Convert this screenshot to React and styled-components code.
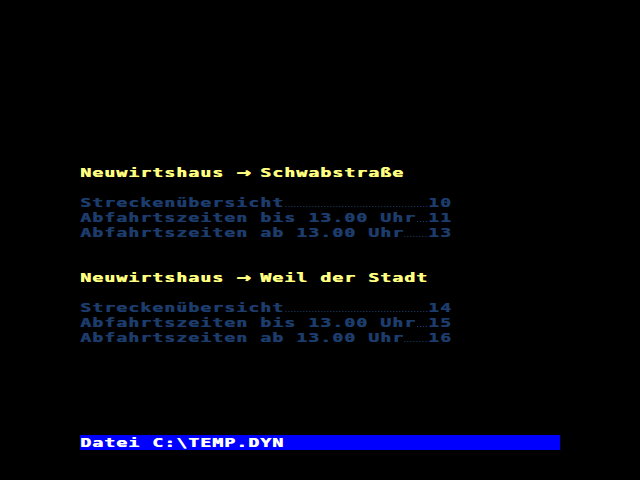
import React from 'react'
import styled, { createGlobalStyle } from 'styled-components'

// the text screen is laid out in 12px columns; glyphs are drawn narrow and stretched
const SCALE = 1.4
const COL = 12 / SCALE

const GlobalStyle = createGlobalStyle`
  html, body {
    margin: 0;
    padding: 0;
    background: #000;
  }
`

const Viewport = styled.div`
  width: 640px;
  height: 480px;
  box-sizing: border-box;
  padding: 165px 0 30px 80px;
  background: #000;
  display: flex;
  overflow: hidden;
`

const Screen = styled.div`
  width: ${40 * COL}px;
  display: flex;
  flex-direction: column;
  transform: scaleX(${SCALE});
  transform-origin: 0 0;
  font-family: "DejaVu Sans Mono", "Liberation Mono", monospace;
  font-weight: bold;
  font-size: 13px;
  line-height: 15px;
  letter-spacing: ${COL - 13 * 0.602}px;
  white-space: pre;
  text-shadow: 0.45px 0 currentColor;
`

const Section = styled.section`
  display: flex;
  flex-direction: column;
  & + & {
    margin-top: 30px;
  }
`

const Title = styled.div`
  height: 15px;
  color: #ffff80;
  margin-bottom: 15px;
`

const Arrow = styled.span`
  display: inline-block;
  width: ${COL}px;
  text-align: center;
  font-size: 17px;
  letter-spacing: 0;
  vertical-align: top;
  line-height: 14px;
`

const Entry = styled.div`
  display: flex;
  width: ${31 * COL}px;
  height: 15px;
  color: #1c3c6c;
`

const Leader = styled.span`
  flex: 1;
  background-image: linear-gradient(to right, #1e4070 ${1 / SCALE}px, transparent ${1 / SCALE}px);
  background-size: ${3 / SCALE}px 1px;
  background-repeat: repeat-x;
  background-position: ${1 / SCALE}px 11px;
`

const StatusBar = styled.div`
  margin-top: auto;
  height: 15px;
  background: #0000ff;
  color: #ffffff;
`

const routes = [
  {
    from: 'Neuwirtshaus',
    to: 'Schwabstraße',
    entries: [
      ['Streckenübersicht', '10'],
      ['Abfahrtszeiten bis 13.00 Uhr', '11'],
      ['Abfahrtszeiten ab 13.00 Uhr', '13'],
    ],
  },
  {
    from: 'Neuwirtshaus',
    to: 'Weil der Stadt',
    entries: [
      ['Streckenübersicht', '14'],
      ['Abfahrtszeiten bis 13.00 Uhr', '15'],
      ['Abfahrtszeiten ab 13.00 Uhr', '16'],
    ],
  },
]

export default function App() {
  return (
    <>
      <GlobalStyle />
      <Viewport>
        <Screen>
          {routes.map((r) => (
            <Section key={r.to}>
              <Title>
                {r.from} <Arrow>→</Arrow> {r.to}
              </Title>
              {r.entries.map(([label, page]) => (
                <Entry key={label + page}>
                  <span>{label}</span>
                  <Leader />
                  <span>{page}</span>
                </Entry>
              ))}
            </Section>
          ))}
          <StatusBar>Datei C:\TEMP.DYN</StatusBar>
        </Screen>
      </Viewport>
    </>
  )
}
